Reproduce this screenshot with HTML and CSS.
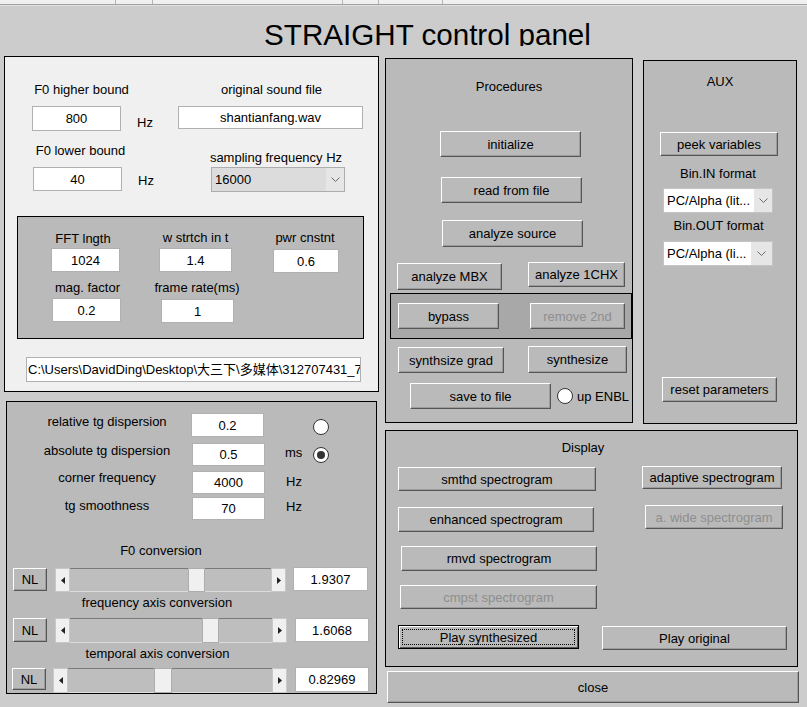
FILE: index.html
```html
<!DOCTYPE html>
<html lang="en">
<head>
<meta charset="utf-8">
<title>STRAIGHT control panel</title>
<link rel="stylesheet" href="styles.css">
</head>
<body>
<div class="toolbar">
  <span class="tb-sep tb1"></span><span class="tb-sep tb2"></span><span class="tb-sep tb3"></span><span class="tb-sep tb4"></span><span class="tb-sep tb5"></span>
</div>
<div class="toolbar-edge"></div>
<div class="title"><h1>STRAIGHT control panel</h1></div>
<div class="main">
  <div class="col-left">
    <section class="panel panel-a">
      <div class="row a-r1">
        <div class="lbl a-l1">F0 higher bound</div>
        <div class="lbl a-l2">original sound file</div>
      </div>
      <div class="row a-r2">
        <div class="edit a-e800">800</div>
        <div class="lbl unit a-hz1">Hz</div>
        <div class="edit a-file">shantianfang.wav</div>
      </div>
      <div class="row a-r3">
        <div class="lbl a-l3">F0 lower bound</div>
        <div class="lbl a-l4">sampling frequency Hz</div>
      </div>
      <div class="row a-r4">
        <div class="edit a-e40">40</div>
        <div class="lbl unit a-hz2">Hz</div>
        <div class="popup a-pop">
          <span class="pop-text">16000</span>
          <span class="pop-arrow a-pop-arrow"><svg width="9" height="5" viewBox="0 0 9 5"><polyline points="0.5,0.5 4.5,4.5 8.5,0.5" fill="none" stroke="#6a6a6a" stroke-width="1"/></svg></span>
        </div>
      </div>
      <div class="panel fft">
        <div class="fft-col fc1">
          <div class="lbl l-fft">FFT lngth</div>
          <div class="edit e-fft">1024</div>
          <div class="lbl l-mag">mag. factor</div>
          <div class="edit e-mag">0.2</div>
        </div>
        <div class="fft-col fc2">
          <div class="lbl l-wst">w strtch in t</div>
          <div class="edit e-wst">1.4</div>
          <div class="lbl l-frm">frame rate(ms)</div>
          <div class="edit e-frm">1</div>
        </div>
        <div class="fft-col fc3">
          <div class="lbl l-pwr">pwr cnstnt</div>
          <div class="edit e-pwr">0.6</div>
        </div>
      </div>
      <div class="edit path">C:\Users\DavidDing\Desktop\大三下\多媒体\312707431_7</div>
    </section>

    <section class="panel panel-b">
      <div class="row b-r1">
        <div class="lbl b-lbl b-l1">relative tg dispersion</div>
        <div class="edit b-e b-e1">0.2</div>
        <div class="lbl b-unit b-u1"></div>
        <div class="radio b-rad1"></div>
      </div>
      <div class="row b-r2">
        <div class="lbl b-lbl">absolute tg dispersion</div>
        <div class="edit b-e b-e2">0.5</div>
        <div class="lbl b-unit b-u2">ms</div>
        <div class="radio on b-rad2"><span class="dot"></span></div>
      </div>
      <div class="row b-r3">
        <div class="lbl b-lbl">corner frequency</div>
        <div class="edit b-e b-e3">4000</div>
        <div class="lbl b-unit b-u3">Hz</div>
      </div>
      <div class="row b-r4">
        <div class="lbl b-lbl b-l4">tg smoothness</div>
        <div class="edit b-e b-e4">70</div>
        <div class="lbl b-unit b-u4">Hz</div>
      </div>
      <div class="lbl b-f0">F0 conversion</div>
      <div class="row s-row s-r1">
        <div class="btn nl nl1">NL</div>
        <div class="slider sl1">
          <span class="sl-arrow sl-left"><svg width="4" height="7" viewBox="0 0 4 7"><polygon points="4,0 0,3.5 4,7" fill="#222"/></svg></span>
          <span class="sl-trough"><span class="sl-thumb th1"></span></span>
          <span class="sl-arrow sl-right"><svg width="4" height="7" viewBox="0 0 4 7"><polygon points="0,0 4,3.5 0,7" fill="#222"/></svg></span>
        </div>
        <div class="edit s-edit se1">1.9307</div>
      </div>
      <div class="lbl s-lbl s-l1">frequency axis conversion</div>
      <div class="row s-row s-r2">
        <div class="btn nl nl2">NL</div>
        <div class="slider sl2">
          <span class="sl-arrow sl-left"><svg width="4" height="7" viewBox="0 0 4 7"><polygon points="4,0 0,3.5 4,7" fill="#222"/></svg></span>
          <span class="sl-trough"><span class="sl-thumb th2"></span></span>
          <span class="sl-arrow sl-right"><svg width="4" height="7" viewBox="0 0 4 7"><polygon points="0,0 4,3.5 0,7" fill="#222"/></svg></span>
        </div>
        <div class="edit s-edit se2">1.6068</div>
      </div>
      <div class="lbl s-lbl s-l2">temporal axis conversion</div>
      <div class="row s-row s-r3">
        <div class="btn nl nl3">NL</div>
        <div class="slider sl3">
          <span class="sl-arrow sl-left"><svg width="4" height="7" viewBox="0 0 4 7"><polygon points="4,0 0,3.5 4,7" fill="#222"/></svg></span>
          <span class="sl-trough"><span class="sl-thumb th3"></span></span>
          <span class="sl-arrow sl-right"><svg width="4" height="7" viewBox="0 0 4 7"><polygon points="0,0 4,3.5 0,7" fill="#222"/></svg></span>
        </div>
        <div class="edit s-edit se3">0.82969</div>
      </div>
    </section>
  </div>

  <div class="col-right">
    <div class="right-top">
      <section class="panel proc">
        <div class="lbl p-title">Procedures</div>
        <div class="btn p-init">initialize</div>
        <div class="btn p-read">read from file</div>
        <div class="btn p-src">analyze source</div>
        <div class="row p-r1">
          <div class="btn p-mbx">analyze MBX</div>
          <div class="btn p-1chx">analyze 1CHX</div>
        </div>
        <div class="panel p-inner">
          <div class="btn p-bypass">bypass</div>
          <div class="btn disabled p-rm2">remove 2nd</div>
        </div>
        <div class="row p-r2">
          <div class="btn p-grad">synthsize grad</div>
          <div class="btn p-syn">synthesize</div>
        </div>
        <div class="row p-r3">
          <div class="btn p-save">save to file</div>
          <div class="radio p-rad"></div>
          <div class="lbl p-enbl">up ENBL</div>
        </div>
      </section>
      <section class="panel aux">
        <div class="lbl x-title">AUX</div>
        <div class="btn x-peek">peek variables</div>
        <div class="lbl x-l1">Bin.IN format</div>
        <div class="popup white x-pop1">
          <span class="pop-text">PC/Alpha (lit...</span>
          <span class="pop-arrow x-arrow1"><svg width="9" height="5" viewBox="0 0 9 5"><polyline points="0.5,0.5 4.5,4.5 8.5,0.5" fill="none" stroke="#6a6a6a" stroke-width="1"/></svg></span>
        </div>
        <div class="lbl x-l2">Bin.OUT format</div>
        <div class="popup white x-pop2">
          <span class="pop-text">PC/Alpha (li...</span>
          <span class="pop-arrow x-arrow2"><svg width="9" height="5" viewBox="0 0 9 5"><polyline points="0.5,0.5 4.5,4.5 8.5,0.5" fill="none" stroke="#6a6a6a" stroke-width="1"/></svg></span>
        </div>
        <div class="btn x-reset">reset parameters</div>
      </section>
    </div>
    <section class="panel display">
      <div class="lbl d-title">Display</div>
      <div class="row d-r1">
        <div class="btn d-smthd">smthd spectrogram</div>
        <div class="btn d-adapt">adaptive spectrogram</div>
      </div>
      <div class="row d-r2">
        <div class="btn d-enh">enhanced spectrogram</div>
        <div class="btn disabled d-wide">a. wide spectrogram</div>
      </div>
      <div class="btn d-rmvd">rmvd spectrogram</div>
      <div class="btn disabled d-cmpst">cmpst spectrogram</div>
      <div class="row d-r3">
        <div class="btn default d-psyn"><span class="focus">Play synthesized</span></div>
        <div class="btn d-porig">Play original</div>
      </div>
    </section>
    <div class="btn close">close</div>
  </div>
</div>
</body>
</html>
```

FILE: styles.css
```css
* { box-sizing: border-box; margin: 0; padding: 0; }
html, body { width: 807px; height: 707px; overflow: hidden; }
body {
  background: #cccccc;
  font-family: "Liberation Sans", Arial, "Noto Sans CJK SC", sans-serif;
  font-size: 13px;
  color: #000;
}

/* top strip */
.toolbar { height: 4px; background: #f0f0f0; display: flex; border-bottom: 1px solid #a0a0a0; height: 5px; }
.tb-sep { width: 1px; height: 4px; background: #b4b4b4; flex: none; }
.tb1 { margin-left: 115px; }
.tb2 { margin-left: 36px; }
.tb3 { margin-left: 189px; }
.tb4 { margin-left: 35px; }
.tb5 { margin-left: 63px; }
.toolbar-edge { height: 1px; background: #e2e2e2; }

.title { height: 28px; margin-top: 12px; overflow: hidden; text-align: center; padding-left: 48px; }
.title h1 { font-size: 29.6px; font-weight: normal; line-height: 34px; color: #000; white-space: nowrap; }

.main { display: flex; align-items: flex-start; margin-top: 10px; }
.col-left { width: 379px; flex: none; }
.col-right { width: 413px; flex: none; margin-left: 6px; }
.right-top { display: flex; align-items: flex-start; }

.row { display: flex; align-items: flex-start; }
.panel { border: 1px solid #000; background: #bababa; flex: none; }

.lbl { line-height: 15px; height: 15px; white-space: nowrap; text-align: center; flex: none; }
.unit { text-align: left; }

.edit {
  background: #fff; border: 1px solid #b0b0b0; flex: none;
  display: flex; align-items: center; justify-content: center;
  line-height: 15px; white-space: nowrap; overflow: hidden;
}

.btn {
  background: #bababa; flex: none;
  border: 1px solid; border-color: #fff #555 #555 #fff;
  box-shadow: inset -1px -1px 0 #9c9c9c;
  display: flex; align-items: center; justify-content: center;
  line-height: 15px; white-space: nowrap;
}
.btn.disabled { color: #8e8e8e; }
.btn.default { border: 1px solid #000; box-shadow: inset 1px 1px 0 #fff, inset -1px -1px 0 #555; padding: 3px; }
.btn .focus { flex: 1; align-self: stretch; border: 1px dotted #000; display: flex; align-items: center; justify-content: center; }

.popup { display: flex; border: 1px solid #adadad; background: #dcdcdc; flex: none; }
.popup.white { background: #fff; border-color: #c4c4c4; }
.pop-text { flex: 1; line-height: 15px; padding-left: 3px; align-self: center; white-space: nowrap; overflow: hidden; }
.pop-arrow { width: 18px; background: #e6e6e6; display: flex; align-items: center; justify-content: center; flex: none; }

.radio {
  width: 16px; height: 16px; border-radius: 50%; border: 1px solid #333; background: #fff; flex: none;
  display: flex; align-items: center; justify-content: center;
}
.radio .dot { width: 8px; height: 8px; border-radius: 50%; background: #333; }

/* ---------- top-left panel ---------- */
.panel-a { margin-left: 4px; width: 375px; height: 336px; background: #f0f0f0; }
.a-r1 { margin-top: 25px; }
.a-l1 { margin-left: 20px; width: 113px; }
.a-l2 { margin-left: 67px; width: 133px; }
.a-r2 { margin-top: 9px; }
.a-e800 { margin-left: 27px; width: 89px; height: 25px; }
.a-hz1 { margin-left: 16px; width: 20px; margin-top: 9px; }
.a-file { margin-left: 21px; width: 185px; height: 23px; }
.a-r3 { margin-top: 0; }
.a-l3 { margin-left: 19px; width: 113px; margin-top: 12px; }
.a-l4 { margin-left: 69px; width: 140px; margin-top: 19px; }
.a-r4 { margin-top: 2px; }
.a-e40 { margin-left: 28px; width: 89px; height: 24px; }
.a-hz2 { margin-left: 16px; width: 20px; margin-top: 6px; }
.a-pop { margin-left: 53px; width: 134px; height: 25px; }
.a-pop .pop-text { padding-left: 3px; }

.fft { display: flex; align-items: flex-start; margin-top: 24px; margin-left: 12px; width: 347px; height: 123px; }
.fft-col { display: flex; flex-direction: column; align-items: flex-start; flex: none; }
.fc1 { width: 120px; }
.fc2 { width: 112px; }
.fc3 { width: 110px; }
.fft .lbl { width: 100%; }
.l-fft { margin-top: 14px; padding-left: 10px; }
.e-fft { margin-top: 2px; margin-left: 33px; width: 69px; height: 24px; }
.l-mag { margin-top: 8px; padding-left: 19px; }
.e-mag { margin-top: 3px; margin-left: 34px; width: 69px; height: 24px; }
.l-wst { margin-top: 13px; padding-left: 3px; }
.e-wst { margin-top: 3px; margin-left: 21px; width: 73px; height: 24px; }
.l-frm { margin-top: 8px; padding-left: 6px; }
.e-frm { margin-top: 4px; margin-left: 23px; width: 73px; height: 24px; }
.l-pwr { margin-top: 13px; }
.e-pwr { margin-top: 4px; margin-left: 23px; width: 66px; height: 24px; }

.path { margin-top: 18px; margin-left: 21px; width: 335px; height: 25px; justify-content: flex-start; padding-left: 1px; }

/* ---------- bottom-left panel ---------- */
.panel-b { margin-left: 6px; margin-top: 9px; width: 371px; height: 293px; overflow: hidden; }
.b-lbl { width: 184px; padding-left: 16px; }
.b-e { width: 73px; height: 23px; }
.b-unit { width: 20px; text-align: left; }
.b-r1 { margin-top: 11px; }
.b-l1 { margin-top: 1px; }
.b-e1 { height: 24px; }
.b-u1 { margin-left: 21px; }
.b-rad1 { margin-left: 8px; margin-top: 6px; }
.b-r2 { margin-top: 6px; }
.b-e2 { margin-left: 1px; }
.b-u2 { margin-left: 20px; margin-top: 2px; }
.b-rad2 { margin-left: 8px; margin-top: 4px; }
.b-r3 { margin-top: 4px; }
.b-e3 { margin-left: 1px; margin-top: 1px; }
.b-u3 { margin-left: 21px; margin-top: 4px; }
.b-r4 { margin-top: 3px; }
.b-l4 { margin-top: 1px; }
.b-e4 { margin-left: 1px; }
.b-u4 { margin-left: 21px; margin-top: 2px; }
.b-f0 { margin-top: 23px; width: 308px; }

.s-r1 { margin-top: 9px; }
.s-r2 { margin-top: 8px; }
.s-r3 { margin-top: 6px; }
.nl { width: 34px; height: 24px; }
.nl1 { margin-left: 6px; margin-top: 1px; height: 23px; }
.nl2 { margin-left: 6px; }
.nl3 { margin-left: 5px; margin-top: 1px; height: 22px; }
.slider { display: flex; flex: none; height: 25px; }
.sl1 { margin-left: 8px; margin-top: 1px; width: 231px; height: 24px; }
.sl2 { margin-left: 8px; width: 232px; }
.sl3 { margin-left: 7px; margin-top: 1px; width: 234px; }
.sl-arrow { width: 15px; flex: none; background: #f0f0f0; display: flex; align-items: center; justify-content: center; border: 1px solid #c8c8c8; }
.sl-trough { flex: 1; display: flex; background: #bebebe; border-top: 1px solid #7a7a7a; border-bottom: 1px solid #dcdcdc; }
.sl-thumb { width: 17px; flex: none; background: #f0f0f0; border: 1px solid #adadad; margin-top: -1px; margin-bottom: -1px; }
.th1 { margin-left: 118px; }
.th2 { margin-left: 132px; }
.th3 { margin-left: 86px; width: 18px; }
.s-edit { width: 74px; height: 24px; }
.se1 { margin-left: 7px; width: 75px; }
.se2 { margin-left: 8px; }
.se3 { margin-left: 8px; height: 25px; }
.s-lbl { margin-top: 3px; }
.s-l1 { width: 300px; }
.s-l2 { width: 301px; }

/* ---------- procedures ---------- */
.proc { margin-top: 2px; width: 248px; height: 365px; }
.p-title { margin-top: 20px; width: 100%; }
.p-init { margin-top: 37px; margin-left: 54px; width: 141px; height: 26px; }
.p-read { margin-top: 20px; margin-left: 55px; width: 141px; height: 26px; }
.p-src { margin-top: 17px; margin-left: 56px; width: 141px; height: 27px; }
.p-r1 { margin-top: 15px; }
.p-mbx { margin-left: 11px; margin-top: 1px; width: 105px; height: 27px; }
.p-1chx { margin-left: 26px; width: 97px; height: 25px; }
.p-inner { display: flex; align-items: flex-start; margin-top: 3px; margin-left: 4px; width: 242px; height: 46px; background: #a8a8a8; }
.p-bypass { margin-left: 7px; margin-top: 9px; width: 101px; height: 26px; }
.p-rm2 { margin-left: 31px; margin-top: 9px; width: 95px; height: 26px; }
.p-r2 { margin-top: 7px; }
.p-grad { margin-left: 12px; margin-top: 1px; width: 106px; height: 26px; }
.p-syn { margin-left: 24px; width: 99px; height: 27px; }
.p-r3 { margin-top: 10px; }
.p-save { margin-left: 24px; width: 141px; height: 26px; }
.p-rad { margin-left: 6px; margin-top: 5px; width: 16px; height: 16px; }
.p-enbl { margin-left: 4px; margin-top: 6px; text-align: left; }

/* ---------- aux ---------- */
.aux { margin-left: 10px; margin-top: 4px; width: 154px; height: 364px; }
.aux .lbl { width: 100%; }
.x-title { margin-top: 13px; }
.x-peek { margin-top: 43px; margin-left: 16px; width: 118px; height: 24px; }
.x-l1 { margin-top: 10px; padding-right: 4px; }
.x-pop1 { margin-top: 7px; margin-left: 19px; width: 110px; height: 25px; }
.x-l2 { margin-top: 5px; padding-right: 3px; }
.x-pop2 { margin-top: 8px; margin-left: 19px; width: 110px; height: 25px; }
.x-arrow2 { width: 21px; }
.x-reset { margin-top: 111px; margin-left: 18px; width: 115px; height: 25px; }

/* ---------- display ---------- */
.display { margin-top: 6px; width: 413px; height: 237px; }
.d-title { margin-top: 9px; width: 394px; }
.d-r1 { margin-top: 11px; }
.d-smthd { margin-left: 12px; margin-top: 1px; width: 198px; height: 24px; }
.d-adapt { margin-left: 46px; width: 140px; height: 23px; }
.d-r2 { margin-top: 14px; }
.d-enh { margin-left: 12px; margin-top: 2px; width: 196px; height: 25px; }
.d-wide { margin-left: 51px; width: 138px; height: 24px; }
.d-rmvd { margin-top: 14px; margin-left: 15px; width: 196px; height: 25px; }
.d-cmpst { margin-top: 14px; margin-left: 14px; width: 197px; height: 24px; }
.d-r3 { margin-top: 16px; }
.d-psyn { margin-left: 12px; width: 181px; height: 24px; }
.d-porig { margin-left: 23px; margin-top: 1px; width: 185px; height: 24px; }

.close { margin-top: 4px; margin-left: 2px; width: 412px; height: 32px; }
```
